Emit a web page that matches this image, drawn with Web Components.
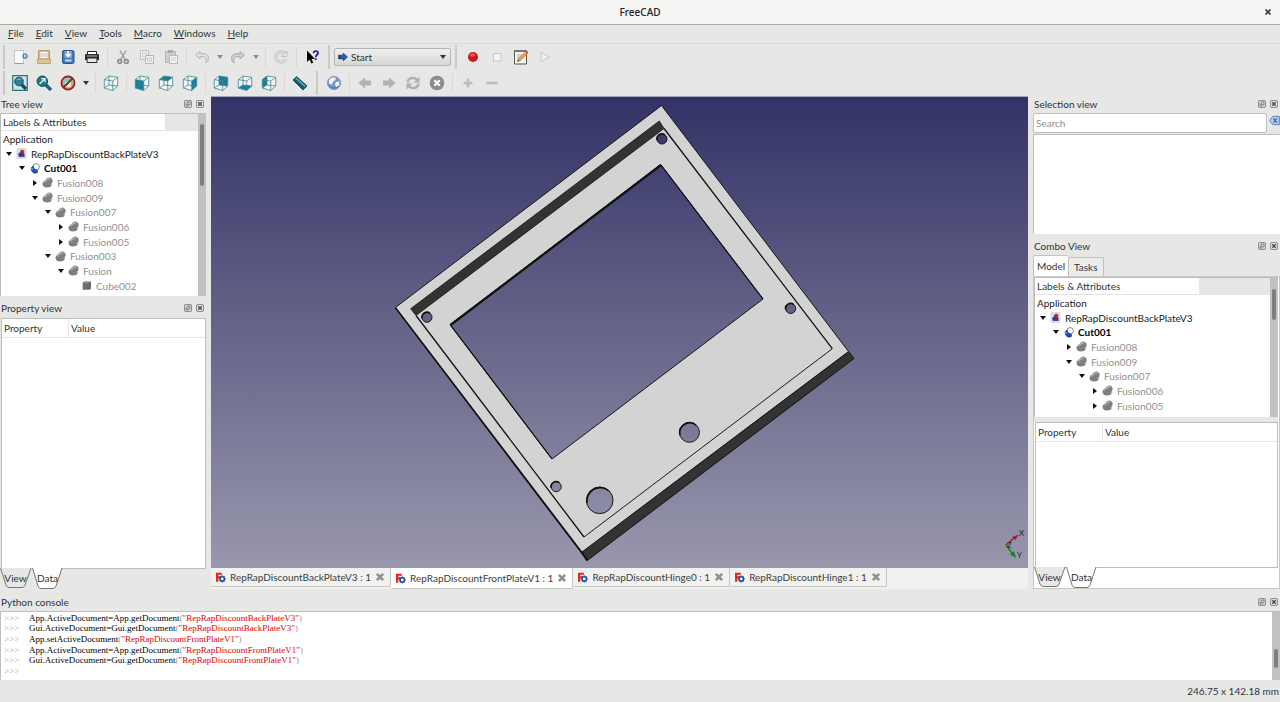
<!DOCTYPE html>
<html lang="en">
<head>
<meta charset="utf-8">
<title>FreeCAD</title>
<style>
    html, body { height: 100%; }
    body {
        margin: 0;
        background: #e7e7e6;
        color: #2e3436;
        font-family: Lato, "Noto Sans", sans-serif;
        font-size: 10px;
        line-height: 14px;
    }
</style>
</head>
<body>
<cad-window></cad-window>

<script>
(function () {
    // Cube views all share one wireframe, only the filled face differs
    const cube = (face) => `
        <path d="M1.300 4.600L6 1L14.700 2.300V11L9.700 15.500L1.300 13Z" fill="#fff" fill-opacity=".6"/>
        ${face ? `<path d="${face}" fill="#1b7d99"/>` : ""}
        <path d="M1.300 4.600L9.700 6V15.500L1.300 13Z M1.300 4.600L6 1L14.700 2.300L9.700 6 M14.700 2.300V11L9.700 15.500 M6 1V10L1.300 13 M6 10L14.700 11" fill="none" stroke="#3c8792" stroke-width=".8"/>`;

    const ICONS = {
        "new": `<path d="M2.500 1.500H11.500V14.500H2.500Z" fill="#fbfbfb" stroke="#c4c4c4"/><path d="M2.500 14.500H11.500" stroke="#999"/><circle cx="13" cy="7" r="2.600" fill="#2d5fa9"/><path d="M13 5.300V8.700M11.300 7H14.700" stroke="#fff"/>`,
        "open": `<path d="M2.500 1.500H13.500V12H2.500Z" fill="#d3b98c" stroke="#b79c6f"/><path d="M4.500 3H11.500V9H4.500Z" fill="#fff"/><path d="M5 5H11M5 7H11" stroke="#bbb"/><path d="M1.500 10H14.500V14.500H1.500Z" fill="#dcc498" stroke="#bda274"/>`,
        "save": `<rect x="2.500" y="1.500" width="11.500" height="13" rx="1.500" fill="#4379b8" stroke="#26568f"/><path d="M4.500 2H12V9H4.500Z" fill="#7ba6d6"/><path d="M8.200 2V7M5.800 5L8.200 7.500L10.600 5" fill="none" stroke="#fff" stroke-width="1.500"/><path d="M5 10.500H11.500V12.500H5Z" fill="#c8dcf0"/>`,
        "print": `<path d="M3.500 2.500H12.500V6H3.500Z" fill="#fff" stroke="#222"/><path d="M1 5.500Q1 5 2 5H14Q15 5 15 6V11H1Z" fill="#2c2f30"/><path d="M3 9H13V13.500H3Z" fill="#e4e7e2" stroke="#222"/><path d="M3 7H13" stroke="#a9b8a0"/>`,
        "cut": `<path d="M5 1.500L10.500 11M11 1.500L5.500 11" stroke="#a9a9a9" stroke-width="1.600"/><g fill="none" stroke="#8e8e8e" stroke-width="1.700"><circle cx="4.700" cy="12.500" r="1.900"/><circle cx="11.300" cy="12.500" r="1.900"/></g>`,
        "copy": `<path d="M1.500 1.500H9.500V10.500H1.500Z" fill="#eee" stroke="#c0c0c0"/><path d="M3.500 4H7.500V8H3.500Z" fill="none" stroke="#ccc"/><path d="M6.500 6.500H14.500V14.500H6.500Z" fill="#f0f0f0" stroke="#b5b5b5"/><path d="M8.500 9H12.500V12H8.500Z" fill="none" stroke="#c4c4c4"/>`,
        "paste": `<path d="M2.500 2.500H12.500V13.500H2.500Z" fill="#d0d0d0" stroke="#b2b2b2"/><path d="M5 1H10V4H5Z" fill="#a8a8a8"/><path d="M6.500 6.500H14.500V14.500H6.500Z" fill="#f3f3f3" stroke="#b8b8b8"/><path d="M8 9H13M8 11H13" stroke="#ccc"/>`,
        "undo": `<path d="M1.500 6L6 2.500V4.700H10Q14.500 5 14.500 9.500Q14.500 12.500 12 14Q13 8 9.500 7.600H6V10Z" fill="#e0e0e0" stroke="#b4b4b4"/>`,
        "redo": `<path d="M14.500 6L10 2.500V4.700H6Q1.500 5 1.500 9.500Q1.500 12.500 4 14Q3 8 6.500 7.600H10V10Z" fill="#cfcfcf" stroke="#acacac"/>`,
        "refresh": `<path d="M12.200 4.600A5.200 5.200 0 1 0 13 10" fill="none" stroke="#bdbdbd" stroke-width="3"/><path d="M12.200 4.600A5.200 5.200 0 1 0 13 10" fill="none" stroke="#e9e9e9" stroke-width="1.200"/><path d="M14 2V7.500H8.500Z" fill="#e9e9e9" stroke="#bdbdbd"/>`,
        "whatsthis": `<path d="M3 1.500V13L5.600 10.600L7.300 14.600L9.200 13.800L7.500 10H11Z" fill="#000"/><path d="M9.500 4.200Q9.700 2 11.800 2Q14 2 14 4Q14 5.300 12.700 6.200Q11.800 6.900 11.800 8.300" fill="none" stroke="#1d12a8" stroke-width="1.700"/><circle cx="11.800" cy="10.300" r="1" fill="#1d12a8"/>`,
        "record": `<circle cx="8" cy="8" r="5" fill="#d4141c"/><ellipse cx="7.500" cy="6" rx="2.800" ry="1.800" fill="#f0575c"/>`,
        "stop": `<path d="M4.500 4.500H12V12H4.500Z" fill="#f4f4f4" stroke="#c8c8c8"/>`,
        "edit": `<path d="M1.500 2.500H13.500V15H1.500Z" fill="#f3f3f1" stroke="#55564f"/><path d="M1 2H14" stroke="#777" stroke-width="2"/><path d="M4 6H9M4 8H8M4 10H6" stroke="#aaa"/><path d="M4.500 12.500L5.500 9.700L12.800 2.500L14.700 4.300L7.500 11.500Z" fill="#f0a04a" stroke="#b5642a" stroke-width=".6"/><path d="M12.300 2.800L13.500 1.600L15.500 3.500L14.300 4.700Z" fill="#d8434a"/><path d="M4.500 12.500L5 10.800L6.300 12Z" fill="#333"/>`,
        "play": `<path d="M4 3.500L12.500 8L4 12.500Z" fill="#efefef" stroke="#c6c6c6"/>`,
        "fitall": `<path d="M.7.700H15.300V15.300H.7Z" fill="#cfe3e6" stroke="#2b7482" stroke-width="1.200"/><path d="M9.500 9.500L14 14" stroke="#0e4f5e" stroke-width="3.200"/><circle cx="7" cy="6.500" r="4.300" fill="#2a8297" stroke="#0e5464"/><path d="M5 5Q6.500 3.300 8.600 4.300" fill="none" stroke="#8cd0dc"/>`,
        "fitsel": `<path d="M9.500 9.500L15 15" stroke="#14687c" stroke-width="3.400"/><circle cx="6.300" cy="6.200" r="5.200" fill="#23788c" stroke="#0d4c5b"/><path d="M3.500 9L8.500 4M5.300 3.600H9V7.300" fill="none" stroke="#e6f5f7" stroke-width="1.300"/>`,
        "drawstyle": `<circle cx="8" cy="8.300" r="5.500" fill="#74cfc6"/><path d="M5 7H11V12H5Z" fill="#e7f1ba"/><circle cx="8" cy="8" r="6.500" fill="none" stroke="#a81d1d" stroke-width="1.900"/><path d="M3.500 12.500L12.500 3.500" stroke="#a81d1d" stroke-width="1.900"/>`,
        "axo": cube(""),
        "front": cube("M1.300 4.600L9.700 6V15.500L1.300 13Z"),
        "top": cube("M1.300 4.600L6 1L14.700 2.300L9.700 6Z"),
        "right": cube("M9.700 6L14.700 2.300V11L9.700 15.500Z"),
        "rear": cube("M6 1L14.700 2.300V11L6 10Z"),
        "bottom": cube("M1.300 13L6 10L14.700 11L9.700 15.500Z"),
        "left": cube("M1.300 4.600L6 1V10L1.300 13Z"),
        "measure": `<path d="M1 5L4.500 1.500L15 11L11 15Z" fill="#1a5f74" stroke="#123844" stroke-width=".8"/><path d="M4.300 2.500L14 11L12.800 12.200L3 3.800Z" fill="#45a3bb"/><path d="M3 6.500L4 5.500M5 8.300L6 7.300M7 10L8 9M9 12L10 11" stroke="#062a35"/>`,
        "web": `<circle cx="8" cy="8" r="6.500" fill="#6f9ad0" stroke="#7f93ad"/><path d="M3 5Q5.500 1.500 9.500 2.500L9.500 5L7 6.500L6 9.500L3 8.500Z M10 7L13.500 6.500L13 10.500L10.500 12.500L9 9.500Z" fill="#f1f6fa"/><path d="M3 11Q8 15 13 11" fill="none" stroke="#4470ad"/>`,
        "prev": `<path d="M1.500 8L8 2.500V5.500H14V10.500H8V13.500Z" fill="#b1b1b1"/>`,
        "next": `<path d="M14.500 8L8 2.500V5.500H2V10.500H8V13.500Z" fill="#b1b1b1"/>`,
        "reload": `<path d="M2.500 7.500Q3 3 8 3Q10.500 3 12 4.800M13.500 8.500Q13 13 8 13Q5.500 13 4 11.200" fill="none" stroke="#b0b0b0" stroke-width="2.400"/><path d="M14.500 1.500V7.500H8.500ZM1.500 14.500V8.500H7.500Z" fill="#b0b0b0"/>`,
        "cancel": `<circle cx="8" cy="8" r="7.300" fill="#8b8b8b"/><path d="M5.300 5.300L10.700 10.700M10.700 5.300L5.300 10.700" stroke="#fff" stroke-width="2.300"/>`,
        "zoomin": `<path d="M8 3.500V12.500M3.500 8H12.500" stroke="#bcbcbc" stroke-width="2.600"/>`,
        "zoomout": `<path d="M2.500 8H13.500" stroke="#bcbcbc" stroke-width="2.600"/>`,
        "start": `<path d="M1 5H3V11H1ZM4 5H8.500V2L15 8L8.500 14V11H4Z" fill="#1d61cc" stroke="#0a1d40"/>`,
        "doc": `<path d="M1.500 1H14.500V15H1.500Z" fill="#dfe3ee" stroke="#c3c9d8"/><path d="M6 4L9 2L12 4V8L9 10L6 8Z" fill="#c22626"/><path d="M3.500 7.500L6.500 6L9 7.500V12L6.500 13.500L3.500 12Z" fill="#2b3f9c"/><path d="M8 8.500H12.500V13H8Z" fill="#55307f"/>`,
        "cutop": `<circle cx="10.500" cy="5.500" r="4.700" fill="#fff" stroke="#5d6f8f" stroke-width="1.200"/><path d="M5.500 4.500A5.200 5.200 0 1 0 12.500 13.500L12 10.500Q6.500 10 6 5Z" fill="#1c4fb4" stroke="#0d2f77"/><circle cx="4.500" cy="8.500" r="1.700" fill="#5f93e8"/>`,
        "fusion": `<path d="M5 4.500Q8 .3 12.500 1Q16 2.500 15.500 6.500Q15 8.500 13.500 10Q14.500 12.500 12.500 14Q9 15.500 4.500 15Q.5 13.500.8 9.500Q1.500 6 5 4.500Z" fill="#7f7f7f"/><path d="M3.500 8Q7 2.500 12 3" fill="none" stroke="#b0b0b0" stroke-width="2"/><path d="M11 11H15" stroke="#a5a5a5"/>`,
        "box": `<path d="M2.500 4L5 2H14V12L12 14H2.500Z" fill="#6f6f6f"/><path d="M2.500 4L5 2H14L12 4Z" fill="#9e9e9e"/><path d="M12 4L14 2V12L12 14Z" fill="#565656"/>`,
        "freecad": `<path d="M1.500 1H10V4H4.800V6H8V8.800H4.800V14H1.500Z" fill="#e8221c"/><circle cx="10.500" cy="10" r="3.100" fill="#fff" stroke="#1d4a9e" stroke-width="2.200"/><path d="M10.500 4.800V6.500M10.500 13.500V15.200M5.300 10H7M14 10H15.700M7 6.500L8 7.500M13 12.500L14 13.500M14 6.500L13 7.500M7 13.500L8 12.500" stroke="#1d4a9e" stroke-width="1.600"/>`,
        "close": `<path d="M3 3L13 13M13 3L3 13" stroke="#8f918f" stroke-width="4.400"/>`,
        "float": `<rect x=".8" y=".8" width="14.400" height="14.400" rx="3" fill="#dcdcdc" stroke="#777" stroke-width="1.700"/><path d="M6.500 4H12V9.500H6.500ZM4 7V12H9.500" fill="none" stroke="#666" stroke-width="1.500"/>`,
        "dockclose": `<rect x=".8" y=".8" width="14.400" height="14.400" rx="3" fill="#dcdcdc" stroke="#777" stroke-width="1.700"/><path d="M4.500 4.500L11.500 11.500M11.500 4.500L4.500 11.500" stroke="#444" stroke-width="2.400"/>`,
        "clear": `<path d="M1 8L5.500 2H15V14H5.500Z" fill="#b9cdee" stroke="#5a7fb8" stroke-width="1.400"/><path d="M6.500 5L11.500 11M11.500 5L6.500 11" stroke="#3b62ad" stroke-width="1.800"/>`,
        "winclose": `<path d="M3 3L13 13M13 3L3 13" stroke="#2e3436" stroke-width="3.400"/>`
    };

    // name, icon, depth, state of the expander, look
    const TREE = [
        ["RepRapDiscountBackPlateV3", "doc", 0, "open", ""],
        ["Cut001", "cutop", 1, "open", "bold"],
        ["Fusion008", "fusion", 2, "closed", "dim"],
        ["Fusion009", "fusion", 2, "open", "dim"],
        ["Fusion007", "fusion", 3, "open", "dim"],
        ["Fusion006", "fusion", 4, "closed", "dim"],
        ["Fusion005", "fusion", 4, "closed", "dim"],
        ["Fusion003", "fusion", 3, "open", "dim"],
        ["Fusion", "fusion", 4, "open", "dim"],
        ["Cube002", "box", 5, "none", "dim"]
    ];

    const HISTORY = [
        ["App.setActiveDocument", "RepRapDiscountBackPlateV3"],
        ["App.ActiveDocument=App.getDocument", "RepRapDiscountBackPlateV3"],
        ["Gui.ActiveDocument=Gui.getDocument", "RepRapDiscountBackPlateV3"],
        ["App.setActiveDocument", "RepRapDiscountFrontPlateV1"],
        ["App.ActiveDocument=App.getDocument", "RepRapDiscountFrontPlateV1"],
        ["Gui.ActiveDocument=Gui.getDocument", "RepRapDiscountFrontPlateV1"]
    ];

    function define (name, html) {
        const template = document.createElement("template");
        customElements.define(name, class extends HTMLElement {
            constructor () {
                super();
                this.attachShadow({mode: "open"});
            }
            connectedCallback () {
                template.innerHTML = typeof html === "function" ? html(this) : html;
                this.shadowRoot.replaceChildren(template.content.cloneNode(true));
            }
        });
    }

    define("cad-icon", (el) => `
        <style>
            :host { display: inline-block; width: var(--icon, 16px); height: var(--icon, 16px); flex: none; }
            svg { display: block; width: 100%; height: 100%; }
        </style>
        <svg viewBox="0 0 16 16" aria-hidden="true">${ICONS[el.getAttribute("name")]}</svg>`);

    define("cad-titlebar", `
        <style>
            :host {
                display: grid;
                grid-template-columns: 1fr auto 1fr;
                align-items: center;
                height: 24px;
                background: #f4f4f3;
                border-bottom: 1px solid #a9a9a8;
            }
            h1 { grid-column: 2; margin: 0; font-family: "Noto Sans", sans-serif; font-size: 10px; font-weight: 500; color: #222; }
            button { justify-self: end; margin-right: 8px; padding: 0; border: 0; background: none; display: flex; --icon: 8px; }
        </style>
        <h1><slot></slot></h1>
        <button aria-label="Close window"><cad-icon name="winclose"></cad-icon></button>`);

    define("cad-menubar", `
        <style>
            :host { display: block; border-bottom: 1px solid #dcdcdb; }
            nav { display: flex; gap: 12px; padding: 1px 8px 3px; }
            a { display: inline-block; color: inherit; text-decoration: none; }
            a::first-letter { text-decoration: underline; }
        </style>
        <nav>${["File", "Edit", "View", "Tools", "Macro", "Windows", "Help"].map((m) => `<a href="#">${m}</a>`).join("")}</nav>`);

    define("cad-tool", (el) => `
        <style>
            :host { display: flex; }
            button { padding: 0; border: 0; background: none; display: flex; align-items: center; justify-content: center; height: 22px; }
            .tool { width: 24px; }
            .more { width: 12px; }
            .more::after { content: ""; border: 3px solid transparent; border-top: 4px solid #2e3436; border-bottom: 0; }
            :host([disabled]) .more::after { border-top-color: #8d8d8d; }
        </style>
        <button class="tool" aria-label="${el.getAttribute("icon")}"><cad-icon name="${el.getAttribute("icon")}"></cad-icon></button>
        ${el.hasAttribute("menu") ? `<button class="more" aria-label="More"></button>` : ""}`);

    define("cad-separator", `
        <style>
            :host { display: flex; justify-content: center; width: 7px; height: 20px; }
            :host::before { content: ""; border-left: 1px solid #d9d9d8; }
            :host([handle]) { width: 10px; height: 24px; }
            :host([handle])::before { border-left: 2px solid #cacac9; }
            :host([first]) { width: 8px; }
        </style>`);

    define("cad-toolbar", `
        <style>
            :host { display: flex; align-items: center; height: 26px; }
        </style>
        <slot></slot>`);

    define("cad-workbench", `
        <style>
            :host { position: relative; display: block; width: 117px; height: 18px; }
            select {
                appearance: none;
                box-sizing: border-box;
                width: 100%;
                height: 100%;
                padding: 0 16px;
                border: 1px solid #b4b4b2;
                border-radius: 2px;
                background: linear-gradient(#f0f0ef, #d6d6d5);
                color: inherit;
                font: inherit;
            }
            cad-icon { position: absolute; left: 4px; top: 4px; --icon: 10px; }
            span { position: absolute; right: 5px; top: 7px; border: 3px solid transparent; border-top: 4px solid #2e3436; border-bottom: 0; pointer-events: none; }
        </style>
        <select aria-label="Workbench"><option>Start</option></select>
        <cad-icon name="start"></cad-icon><span></span>`);

    define("cad-dock", (el) => `
        <style>
            :host { display: flex; flex-direction: column; min-height: 0; }
            header { display: flex; align-items: center; gap: 4px; height: 15px; padding: 0 2px 2px 1px; flex: none; --icon: 8px; }
            h2 { flex: 1; margin: 0; font-size: 10px; font-weight: 400; }
            button { padding: 0; border: 0; background: none; display: flex; }
            .body { display: flex; flex-direction: column; flex: 1; min-height: 0; }
        </style>
        <header>
            <h2>${el.getAttribute("label")}</h2>
            <button aria-label="Float"><cad-icon name="float"></cad-icon></button>
            <button aria-label="Close"><cad-icon name="dockclose"></cad-icon></button>
        </header>
        <div class="body"><slot></slot></div>`);

    define("cad-scrollbar", `
        <style>
            :host { display: block; width: 8px; background: #c0c2c0; overflow: hidden; }
            :host::before {
                content: "";
                display: block;
                width: 4px;
                height: var(--thumb-size);
                margin: var(--thumb-start) auto 0;
                border-radius: 2px;
                background: #7b7f7e;
            }
        </style>`);

    define("cad-tree", (el) => `
        <style>
            :host { display: flex; min-height: 0; background: #fff; border: 1px solid #bdbfbd; border-width: 1px 0 0 1px; overflow: hidden; }
            .pane { flex: 1; }
            .head { display: flex; background: #e6e6e6; }
            .head span { height: 17px; line-height: 17px; padding-left: 2px; background: #fff; border-bottom: 1px solid #e4e4e4; box-sizing: border-box; flex: 0 1 164px; }
            ul { margin: 0; padding: 0; list-style: none; color: #1a1a1a; }
            li { display: flex; align-items: center; height: 15px; padding-left: calc(4px + var(--depth) * 13px); --icon: 11px; white-space: nowrap; }
            li:nth-child(3n) { height: 14px; }
            li:first-child { padding-left: 2px; }
            li.bold { color: #000; font-weight: 700; }
            li.dim { color: #919191; }
            i { width: 8px; margin-right: 3px; display: flex; justify-content: center; }
            i.open::before { content: ""; border: 3px solid transparent; border-top: 4px solid #111; border-bottom: 0; }
            i.closed::before { content: ""; border: 3px solid transparent; border-left: 4px solid #111; border-right: 0; }
            cad-icon { margin-right: 4px; }
            cad-scrollbar { --thumb-start: var(--tree-thumb-start, 10px); --thumb-size: var(--tree-thumb-size, 62px); }
        </style>
        <div class="pane">
            <div class="head"><span>Labels &amp; Attributes</span></div>
            <ul>
                <li>Application</li>
                ${TREE.slice(0, Number(el.getAttribute("rows"))).map(([name, icon, depth, state, look]) => `
                <li class="${look}" style="--depth: ${depth}"><i class="${state}"></i><cad-icon name="${icon}"></cad-icon>${name}</li>`).join("")}
            </ul>
        </div>
        <cad-scrollbar></cad-scrollbar>`);

    define("cad-properties", `
        <style>
            :host { display: block; background: #fff; border: 1px solid #bdbfbd; }
            table { width: 100%; border-collapse: collapse; }
            th { height: 18px; padding: 0 2px; text-align: left; font-weight: 400; border-bottom: 1px solid #e6e6e6; }
            th:first-child { width: 62px; border-right: 1px solid #e6e6e6; }
        </style>
        <table><thead><tr><th>Property</th><th>Value</th></tr></thead></table>`);

    // The two trapezoid tabs below a property table
    define("cad-flaptabs", `
        <style>
            :host { display: flex; height: 21px; }
            button { position: relative; width: 31px; height: 21px; padding: 0 0 2px; border: 0; background: none; color: inherit; font: inherit; }
            svg { position: absolute; inset: 0; }
            span { position: relative; }
            path { fill: #e7e7e6; stroke: #777; }
            .on path { fill: #fff; }
            .on { margin-left: 1px; }
        </style>
        <button><svg width="31" height="21"><path d="M.5 0L6 17Q7 19.500 9 19.500H22Q24 19.500 25 17L31 0"/></svg><span>View</span></button>
        <button class="on"><svg width="31" height="21"><path d="M.5 0L6 18Q7 20.500 9 20.500H21Q23 20.500 24 18L30 0"/></svg><span>Data</span></button>`);

    define("cad-viewport", `
        <style>
            :host { display: block; min-height: 0; background: linear-gradient(#333366, #9997ad); border-top: 1px solid #a3a3c0; }
            svg { display: block; width: 100%; height: 100%; }
            text { font-size: 8px; fill: #222; }
        </style>
        <svg viewBox="211 97 817 471" role="img" aria-label="Front plate">
            <path d="M581.700 552L848.500 351.500L854 358.500L587.300 560.500Z" fill="#333" stroke="#111"/>
            <path d="M395.500 307.500L581.700 552.500L587.300 560.500" fill="none" stroke="#0c0c0c" stroke-width="2"/>
            <path fill="#d3d3d3" stroke="#151515" stroke-width="1" fill-rule="evenodd" d="
                M661.500 105.500L848.500 351.500L582 552L395.700 307.300Z
                M660.700 164.500L763 299L552 459L450 324.700Z
                M657 139a5 5 0 1 0 10 0a5 5 0 1 0 -10 0
                M422 317.300a5 5 0 1 0 10 0a5 5 0 1 0 -10 0
                M785.700 308.500a5 5 0 1 0 10 0a5 5 0 1 0 -10 0
                M551.200 486.700a5 5 0 1 0 10 0a5 5 0 1 0 -10 0
                M679.400 432.300a10 10 0 1 0 20 0a10 10 0 1 0 -20 0
                M586.400 500.300a13.300 13.300 0 1 0 26.600 0a13.300 13.300 0 1 0 -26.600 0"/>
            <path d="M659.300 121L410.700 308.700L416 315.500L664 128.500Z" fill="#333" stroke="#111" stroke-width=".8"/>
            <path d="M832.300 348.700L584 537" fill="none" stroke="#1a1a1a"/>
            <path d="M664 128.500L832.300 348.700M416 315.500L584 537" fill="none" stroke="#111" stroke-width="1.300"/>
            <path d="M661 165L450.500 325" stroke="#111" stroke-width="2.200"/>
            <path d="M661 165L763 299M450.500 325L552 459" stroke="#111" stroke-width="1.200"/>
            <g fill="none" stroke="#111" stroke-width="1.600">
                <path d="M657 140a5 5 0 0 1 8 -5M422 318.300a5 5 0 0 1 8 -5M785.700 309.500a5 5 0 0 1 8 -5M551.200 487.700a5 5 0 0 1 8 -5"/>
                <path d="M680 435a10 10 0 0 1 16 -10M587 503a13.300 13.300 0 0 1 22 -12"/>
            </g>
            <path d="M1006 545L1014 538" stroke="#a01d28" stroke-width="1.500"/><path d="M1018.500 534.500L1015.500 540L1012 537Z" fill="#a01d28"/>
            <path d="M1006 545L1012 553" stroke="#16851d" stroke-width="1.500"/><path d="M1016 558L1010 554.500L1014 551Z" fill="#16851d"/>
            <text x="1019" y="536">X</text><text x="1007" y="548">Z</text><text x="1017" y="558">Y</text>
        </svg>`);

    define("cad-doctabs", `
        <style>
            :host { display: flex; align-items: flex-start; height: 26px; background: linear-gradient(#f0f0ef 21px, #e7e7e6 21px); }
            button {
                display: flex;
                align-items: center;
                height: 19px;
                padding: 0 5px 0 4px;
                border: 1px solid #c6c6c5;
                border-width: 0 1px 1px 0;
                border-radius: 0 0 2px 2px;
                background: #f1f1f0;
                color: #3a3f41;
                font: inherit;
            }
            .on { height: 21px; background: #fff; }
            cad-icon:first-child { --icon: 11px; margin-right: 4px; }
            cad-icon:last-child { --icon: 10px; margin-left: 4px; }
        </style>
        ${["BackPlateV3", "FrontPlateV1", "Hinge0", "Hinge1"].map((name, i) => `
        <button class="${i === 1 ? "on" : ""}"><cad-icon name="freecad"></cad-icon>RepRapDiscount${name} : 1<cad-icon name="close"></cad-icon></button>`).join("")}`);

    define("cad-search", `
        <style>
            :host { display: flex; gap: 2px; }
            input { flex: 1; min-width: 0; height: 20px; box-sizing: border-box; padding: 0 2px; border: 1px solid #bdbfbd; border-radius: 2px; background: #fff; font: inherit; }
            input::placeholder { color: #909090; }
            button { display: flex; padding: 2px 0; border: 0; background: none; --icon: 11px; }
        </style>
        <input type="text" placeholder="Search" aria-label="Search">
        <button aria-label="Clear"><cad-icon name="clear"></cad-icon></button>`);

    define("cad-combotabs", `
        <style>
            :host { display: flex; align-items: flex-end; height: 21px; }
            button { height: 19px; padding: 0 5px; border: 1px solid #c1c1c0; border-bottom: 0; border-radius: 2px 2px 0 0; background: #ececeb; color: inherit; font: inherit; }
            .on { height: 21px; padding: 0 3px; background: #fff; border-right: 0; }
        </style>
        <button class="on">Model</button><button>Tasks</button>`);

    define("cad-console", `
        <style>
            :host { display: flex; background: #fff; border: 1px solid #bdbfbd; border-width: 1px 0 0 1px; overflow: hidden; font-family: "Liberation Serif", serif; font-size: 9px; line-height: 10px; color: #000; }
            .lines { flex: 1; display: grid; grid-auto-rows: 1fr; align-items: center; margin: -10px 0 4px 3px; }
            .line { display: grid; grid-template-columns: 25px 1fr; }
            b { font-weight: 400; color: #a0a0a0; }
            em { font-style: normal; color: #e60000; }
            .p { color: #999; }
            cad-scrollbar { --thumb-start: 37px; --thumb-size: 19px; }
        </style>
        <div class="lines">
            ${HISTORY.map(([call, arg]) => `<div class="line"><b>&gt;&gt;&gt;</b><span>${call}<span class="p">(</span><em>"${arg}"</em><span class="p">)</span></span></div>`).join("")}
            <div class="line"><b>&gt;&gt;&gt;</b></div>
        </div>
        <cad-scrollbar></cad-scrollbar>`);

    define("cad-window", `
        <style>
            :host { display: flex; flex-direction: column; height: 100vh; min-height: 560px; }
            main { flex: 1; display: grid; grid-template-columns: 206px minmax(0, 1fr) 247px; column-gap: 5px; min-height: 0; }
            .side { display: flex; flex-direction: column; min-height: 0; padding-bottom: 5px; }
            .center { display: flex; flex-direction: column; min-width: 0; min-height: 0; }
            cad-viewport { flex: 1; }
            .tree { height: 200px; flex: none; }
            .tree cad-tree { flex: 1; }
            .props { margin-top: 4px; flex: 1; }
            .props cad-properties { flex: 1; margin: 1px 0 0 1px; }
            .props cad-flaptabs { margin-top: -1px; }
            .selection { height: 138px; flex: none; }
            .result { flex: 1; margin-top: 1px; background: #fff; border: 1px solid #bdbfbd; border-width: 1px 0 0 1px; }
            .combo { flex: 1; margin-top: 4px; }
            .pane { flex: 1; display: flex; flex-direction: column; min-height: 0; padding: 0 1px 0 0; background: #fff; border: 1px solid #c8c8c7; }
            .pane cad-tree { height: 139px; flex: none; --tree-thumb-start: 11px; --tree-thumb-size: 31px; }
            .pane .split { height: 5px; background: #e7e7e6; }
            .pane cad-properties { flex: 1; margin-left: 1px; }
            .pane cad-flaptabs { margin-top: -1px; }
            .shell { height: 86px; }
            .shell cad-console { flex: 1; }
            footer { display: flex; justify-content: flex-end; align-items: center; height: 22px; padding-right: 1px; }
        </style>
        <cad-titlebar>FreeCAD</cad-titlebar>
        <cad-menubar></cad-menubar>
        <cad-toolbar>
            <cad-separator handle first></cad-separator>
            <cad-tool icon="new"></cad-tool><cad-tool icon="open"></cad-tool><cad-tool icon="save"></cad-tool><cad-tool icon="print"></cad-tool>
            <cad-separator></cad-separator>
            <cad-tool icon="cut"></cad-tool><cad-tool icon="copy"></cad-tool><cad-tool icon="paste"></cad-tool>
            <cad-separator></cad-separator>
            <cad-tool icon="undo" menu disabled></cad-tool><cad-tool icon="redo" menu disabled></cad-tool>
            <cad-separator></cad-separator>
            <cad-tool icon="refresh"></cad-tool>
            <cad-separator></cad-separator>
            <cad-tool icon="whatsthis"></cad-tool>
            <cad-separator handle></cad-separator>
            <cad-workbench></cad-workbench>
            <cad-separator handle></cad-separator>
            <cad-tool icon="record"></cad-tool><cad-tool icon="stop"></cad-tool><cad-tool icon="edit"></cad-tool><cad-tool icon="play"></cad-tool>
        </cad-toolbar>
        <cad-toolbar>
            <cad-separator handle first></cad-separator>
            <cad-tool icon="fitall"></cad-tool><cad-tool icon="fitsel"></cad-tool><cad-tool icon="drawstyle" menu></cad-tool>
            <cad-separator></cad-separator>
            <cad-tool icon="axo"></cad-tool>
            <cad-separator></cad-separator>
            <cad-tool icon="front"></cad-tool><cad-tool icon="top"></cad-tool><cad-tool icon="right"></cad-tool>
            <cad-separator></cad-separator>
            <cad-tool icon="rear"></cad-tool><cad-tool icon="bottom"></cad-tool><cad-tool icon="left"></cad-tool>
            <cad-separator></cad-separator>
            <cad-tool icon="measure"></cad-tool>
            <cad-separator handle></cad-separator>
            <cad-tool icon="web"></cad-tool>
            <cad-separator></cad-separator>
            <cad-tool icon="prev"></cad-tool><cad-tool icon="next"></cad-tool><cad-tool icon="reload"></cad-tool><cad-tool icon="cancel"></cad-tool>
            <cad-separator></cad-separator>
            <cad-tool icon="zoomin"></cad-tool><cad-tool icon="zoomout"></cad-tool>
        </cad-toolbar>
        <main>
            <div class="side">
                <cad-dock class="tree" label="Tree view"><cad-tree rows="10"></cad-tree></cad-dock>
                <cad-dock class="props" label="Property view"><cad-properties></cad-properties><cad-flaptabs></cad-flaptabs></cad-dock>
            </div>
            <div class="center">
                <cad-viewport></cad-viewport>
                <cad-doctabs></cad-doctabs>
            </div>
            <div class="side">
                <cad-dock class="selection" label="Selection view"><cad-search></cad-search><div class="result"></div></cad-dock>
                <cad-dock class="combo" label="Combo View">
                    <cad-combotabs></cad-combotabs>
                    <div class="pane">
                        <cad-tree rows="7"></cad-tree>
                        <div class="split"></div>
                        <cad-properties></cad-properties>
                        <cad-flaptabs></cad-flaptabs>
                    </div>
                </cad-dock>
            </div>
        </main>
        <cad-dock class="shell" label="Python console"><cad-console></cad-console></cad-dock>
        <footer>246.75 x 142.18 mm</footer>`);
})();
</script>
</body>
</html>
